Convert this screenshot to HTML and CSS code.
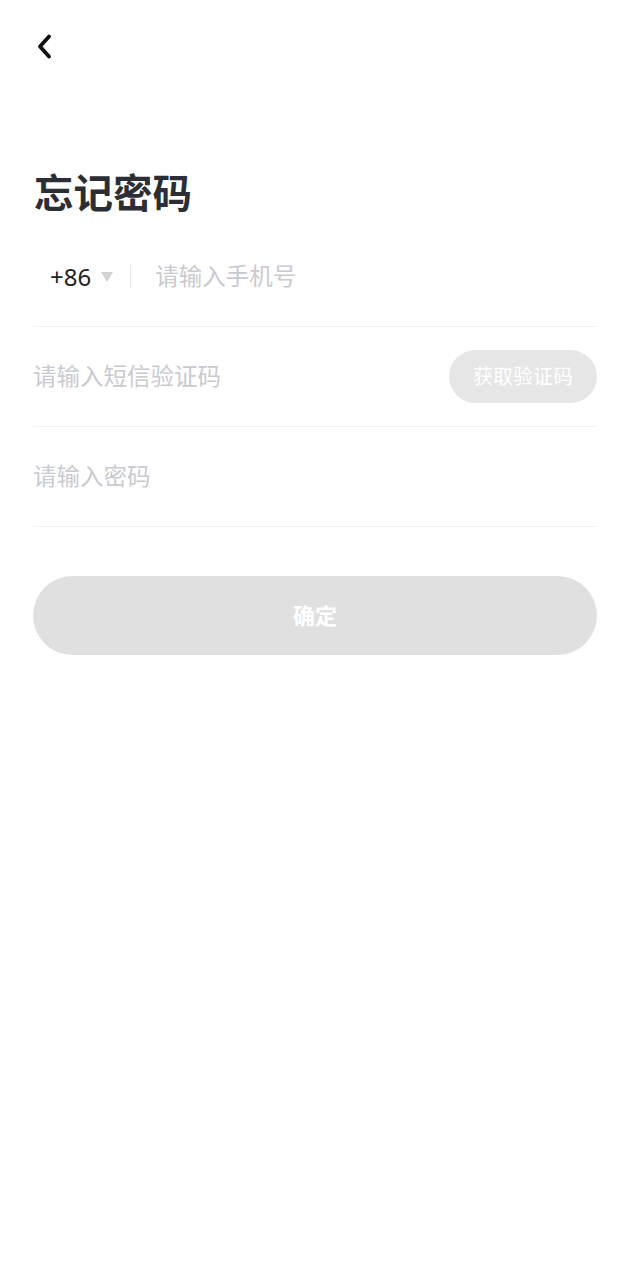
FILE: index.html
```html
<!DOCTYPE html>
<html lang="zh-CN">
<head>
<meta charset="utf-8">
<title>忘记密码</title>
<link rel="stylesheet" href="styles.css">
</head>
<body>
<div class="page">
  <header class="header">
    <svg class="back" width="18" height="28" viewBox="0 0 18 28">
      <path d="M14 3.5 L5 13.5 L14 23.5" fill="none" stroke="#111" stroke-width="3.8" stroke-linecap="round" stroke-linejoin="round"/>
    </svg>
  </header>
  <h1 class="title">忘记密码</h1>
  <div class="form">
    <div class="row">
      <div class="area">
        <span class="code">+86</span>
        <span class="tri"></span>
      </div>
      <span class="sep"></span>
      <input class="field phone" type="text" placeholder="请输入手机号">
    </div>
    <div class="row">
      <input class="field" type="text" placeholder="请输入短信验证码">
      <button class="sms">获取验证码</button>
    </div>
    <div class="row">
      <input class="field" type="password" placeholder="请输入密码">
    </div>
  </div>
  <button class="submit">确定</button>
</div>
</body>
</html>
```

FILE: styles.css
```css
* { box-sizing: border-box; }
html, body { margin: 0; padding: 0; background: #fff; }
body {
  font-family: "Noto Sans CJK SC", "Noto Sans", sans-serif;
  color: #2b2e34;
}
.page {
  padding: 0 33px;
}
.header {
  height: 94px;
  display: flex;
  align-items: center;
}
.back {
  display: block;
  margin-left: 2px;
}
.title {
  margin: 72px 0 11px 1px;
  font-size: 39.5px;
  line-height: 50px;
  font-weight: 700;
  color: #2b2e34;
}
.form {
  display: flex;
  flex-direction: column;
}
.row {
  height: 100px;
  border-bottom: 1px solid #f2f2f2;
  display: flex;
  align-items: center;
}
.area {
  display: flex;
  align-items: center;
  padding-left: 17px;
  gap: 10px;
}
.code {
  font-family: "Noto Sans", sans-serif;
  font-size: 24px;
  color: #222;
  line-height: 1;
}
.tri {
  width: 0;
  height: 0;
  border-left: 6px solid transparent;
  border-right: 6px solid transparent;
  border-top: 10px solid #d2d2d2;
  margin-top: 1px;
}
.sep {
  width: 1px;
  height: 23px;
  background: #e6e6e6;
  margin: 0 24px 0 17px;
}
.field {
  flex: 1;
  min-width: 0;
  border: 0;
  outline: 0;
  padding: 0;
  background: transparent;
  font-family: "Noto Sans CJK SC", sans-serif;
  font-size: 23.5px;
  color: #222;
  height: 40px;
  margin-top: -3px;
}
.field::placeholder {
  color: #c8cad0;
}
.sms {
  width: 148px;
  height: 53px;
  border: 0;
  border-radius: 27px;
  background: #e6e6e6;
  color: #fff;
  font-family: "Noto Sans CJK SC", sans-serif;
  font-size: 20px;
  line-height: 1;
  padding: 0 0 2px;
  flex-shrink: 0;
}
.submit {
  display: block;
  width: 100%;
  height: 79px;
  margin-top: 49px;
  border: 0;
  border-radius: 40px;
  background: #e0e0e0;
  color: #fff;
  font-family: "Noto Sans CJK SC", sans-serif;
  font-size: 22px;
  font-weight: 700;
  line-height: 1;
  padding: 0 0 3px;
}
```
